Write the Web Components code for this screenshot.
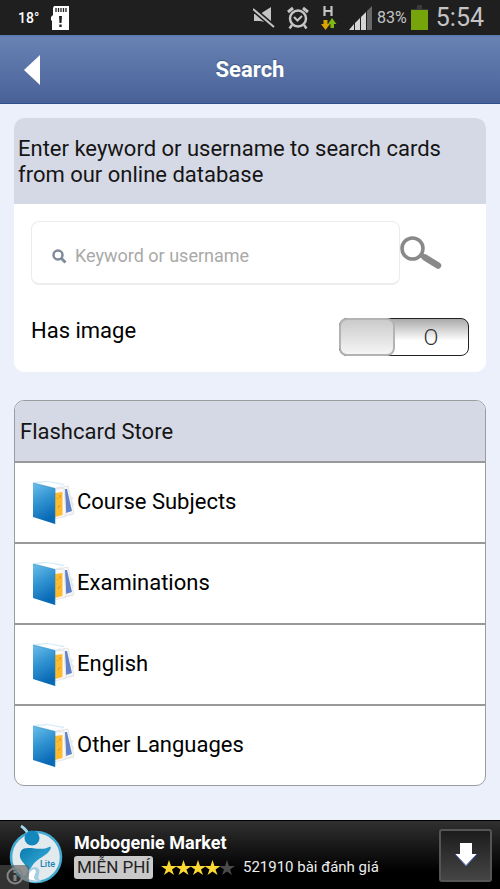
<!DOCTYPE html>
<html lang="en">
<head>
<meta charset="utf-8">
<meta name="viewport" content="width=device-width, initial-scale=1">
<title>Search</title>
<style>
    body {
        margin: 0;
        background: #ecf0fa;
        font-family: Roboto, "Noto Sans", sans-serif;
        font-size: 22px;
        line-height: 26px;
        color: #151515;
    }
</style>
</head>
<body>
<search-app></search-app>

<script>
class StatusBar extends HTMLElement {
    constructor() {
        super();
        this.attachShadow({ mode: 'open' });
    }

    connectedCallback() {
        this.shadowRoot.innerHTML = `
            <style>
                :host {
                    display: flex;
                    align-items: center;
                    justify-content: space-between;
                    height: 35px;
                    padding: 0 16px 0 18px;
                    background: #1f1f1f;
                    color: #c4c4c4;
                }
                div { display: flex; align-items: center; }
                svg { display: block; }
                .left { gap: 12px; color: #fff; }
                .temp { font-size: 14px; font-weight: 500; }
                .right { gap: 4px; }
                .level { font-size: 16px; }
                .clock { font-size: 25px; margin-left: 4px; }
                .icons { gap: 12px; }
            </style>
            <div class="left">
                <span class="temp">18°</span>
                <svg width="18" height="24" viewBox="0 0 18 24">
                    <path d="M3 0H18V24H1V15L0 14V11L2 9V2Z" fill="#fff"/>
                    <path d="M5 2V6M7.5 2V6M10 2V6M12.500 2V6M15 2V6" stroke="#1f1f1f" stroke-width="1.300"/>
                    <path d="M8 10H11L10.500 17H8.500ZM8.300 18.500H10.700V21H8.300Z" fill="#1f1f1f"/>
                </svg>
            </div>
            <div class="right">
                <div class="icons">
                    <svg width="22" height="22" viewBox="0 0 22 22">
                        <path d="M1 7H7L18 0V19L12 15L7 14H1Z" fill="#c4c4c4"/>
                        <path d="M0 2L21 20" stroke="#1f1f1f" stroke-width="5"/>
                        <path d="M0 2L21 20" stroke="#c4c4c4" stroke-width="2"/>
                    </svg>
                    <svg width="22" height="24" viewBox="0 0 22 24" fill="none" stroke="#c4c4c4">
                        <circle cx="11" cy="12.500" r="8" stroke-width="2.500"/>
                        <path d="M1 6L6 2M21 6L16 2" stroke-width="3"/>
                        <path d="M5 19L2.500 22.500M17 19L19.500 22.500" stroke-width="2.500"/>
                        <path d="M7 11L10.500 14.500L15 10" stroke-width="2"/>
                    </svg>
                    <svg width="16" height="24" viewBox="0 0 16 24">
                        <path d="M3.500 0V10M10.500 0V10M3.500 5H10.500" stroke="#c4c4c4" stroke-width="2.200"/>
                        <path d="M2.500 14H6.500V18H9L4.500 24L0 18H2.500Z" fill="#d9a400"/>
                        <path d="M11 12L15.500 18H13V22H9.500V18H7Z" fill="#7fb80e"/>
                    </svg>
                    <svg width="24" height="24" viewBox="0 0 24 24">
                        <path d="M0 24L5 18V24ZM6 24V17L11 12V24ZM12 24V11L17 6V24Z" fill="#d5d5d5"/>
                        <path d="M18 24V5L23 0V24Z" fill="#686868"/>
                    </svg>
                </div>
                <span class="level">83%</span>
                <svg width="17" height="25" viewBox="0 0 17 25">
                    <path d="M6 0H11V4H17V7H0V4H6Z" fill="#3a3a3a"/>
                    <path d="M0 5H17V25H0Z" fill="#76a50b"/>
                </svg>
                <span class="clock">5:54</span>
            </div>
        `;
    }
}

class TitleBar extends HTMLElement {
    constructor() {
        super();
        this.attachShadow({ mode: 'open' });
    }

    connectedCallback() {
        this.shadowRoot.innerHTML = `
            <style>
                :host {
                    display: grid;
                    grid-template-columns: 64px 1fr 64px;
                    align-items: center;
                    height: 66px;
                    border-top: 2px solid #5b7cb4;
                    border-bottom: 1px solid #2f4e8c;
                    background: linear-gradient(#6982b4, #486298);
                    color: #fff;
                }
                button {
                    height: 48px;
                    padding: 0;
                    border: 0;
                    background: none;
                }
                svg { display: block; margin: 0 auto; }
                h1 {
                    margin: 0;
                    font-size: 22px;
                    font-weight: 700;
                    text-align: center;
                    text-shadow: 0 -1px 1px #3e5780;
                }
            </style>
            <button aria-label="Back">
                <svg width="16" height="30" viewBox="0 0 16 30"><path d="M0 15L16 0V30Z" fill="#fff"/></svg>
            </button>
            <h1><slot></slot></h1>
        `;
    }
}

class CardPanel extends HTMLElement {
    constructor() {
        super();
        this.attachShadow({ mode: 'open' });
    }

    connectedCallback() {
        this.shadowRoot.innerHTML = `
            <style>
                :host {
                    display: block;
                    border-radius: 10px;
                    overflow: hidden;
                    background: #fff;
                }
                :host([outlined]) { border: 1px solid #999da2; }
                header {
                    padding: 18px 4px 16px;
                    background: #d5d9e5;
                }
                :host([outlined]) header { padding-left: 5px; }
            </style>
            <header><slot name="head"></slot></header>
            <slot></slot>
        `;
    }
}

class SearchForm extends HTMLElement {
    constructor() {
        super();
        this.attachShadow({ mode: 'open' });
    }

    connectedCallback() {
        this.shadowRoot.innerHTML = `
            <style>
                :host { display: block; padding: 17px 17px 16px; }
                .row { display: flex; align-items: flex-start; }
                .field {
                    flex: 1;
                    display: flex;
                    align-items: center;
                    gap: 8px;
                    height: 54px;
                    padding: 7px 20px 0;
                    border: 1px solid #ececec;
                    border-bottom-width: 2px;
                    border-radius: 8px;
                }
                input[type="text"] {
                    flex: 1;
                    min-width: 0;
                    padding: 0;
                    border: 0;
                    outline: 0;
                    background: none;
                    font: inherit;
                    font-size: 18px;
                    color: inherit;
                }
                input::placeholder { color: #a9a9a9; opacity: 1; }
                button {
                    width: 69px;
                    height: 64px;
                    padding: 0;
                    border: 0;
                    background: none;
                }
                svg { display: block; }
                .option { justify-content: space-between; margin-top: 33px; }
                .option > label { color: #000; }
                .toggle {
                    display: flex;
                    width: 128px;
                    height: 36px;
                    border: 1px solid #222;
                    border-radius: 8px;
                    background: linear-gradient(#aaa, #fff 60%);
                }
                .toggle input {
                    appearance: none;
                    width: 56px;
                    margin: -1px;
                    border: 2px solid #b3b3b3;
                    border-radius: 8px;
                    background: linear-gradient(#cbcbcb, #f5f5f5);
                }
                .toggle span {
                    flex: 1;
                    padding-top: 6px;
                    text-align: center;
                    font-weight: 300;
                    color: #333;
                }
            </style>
            <div class="row">
                <div class="field">
                    <svg width="15" height="15" viewBox="0 0 15 15" fill="none" stroke="#7f8b9a">
                        <circle cx="6" cy="6" r="4.500" stroke-width="2.500"/>
                        <path d="M9.500 9.500L13.500 13.500" stroke-width="3"/>
                    </svg>
                    <input type="text" id="keyword" aria-label="Keyword or username" placeholder="Keyword or username">
                </div>
                <button aria-label="Search">
                    <svg width="42" height="34" viewBox="0 0 42 34" fill="none" stroke="#898989">
                        <circle cx="12.500" cy="12.500" r="10.500" stroke-width="3.600"/>
                        <path d="M20 18L25 22" stroke-width="4.500"/>
                        <path d="M25 21.500L38 29.500" stroke-width="6.500" stroke-linecap="round"/>
                    </svg>
                </button>
            </div>
            <div class="row option">
                <label for="has-image">Has image</label>
                <div class="toggle">
                    <input type="checkbox" role="switch" id="has-image">
                    <span>O</span>
                </div>
            </div>
        `;
    }
}

class StoreItem extends HTMLElement {
    constructor() {
        super();
        this.attachShadow({ mode: 'open' });
    }

    connectedCallback() {
        this.shadowRoot.innerHTML = `
            <style>
                :host { display: block; border-top: 2px solid #999; }
                a {
                    display: flex;
                    align-items: center;
                    height: 79px;
                    padding-left: 17px;
                    color: #000;
                    text-decoration: none;
                }
                svg { flex: none; }
                span { padding-bottom: 2px; }
            </style>
            <a href="#">
                <svg width="45" height="45" viewBox="0 0 45 45">
                    <defs>
                        <linearGradient id="cover" x1="0" y1="0" x2="0.300" y2="1">
                            <stop offset="0" stop-color="#69bfe9"/>
                            <stop offset="0.500" stop-color="#3293d2"/>
                            <stop offset="1" stop-color="#0869b5"/>
                        </linearGradient>
                    </defs>
                    <path d="M37 15L42 18L40 21L43 25L40 27L42 35L35 36Z" fill="#efefef"/>
                    <path d="M1 2L15 1L33 4L23 9Z" fill="#cfecf8"/>
                    <path d="M5 3L16 2L31 5L23 8Z" fill="#fff"/>
                    <path d="M25 8L36 6L42 33L31 37Z" fill="#f8f8f8" stroke="#e0e0e0" stroke-width="0.800"/>
                    <path d="M33 9L35 9L40 31L34 33Z" fill="#5f83cb"/>
                    <path d="M23 9L32 8L34 36L23 39Z" fill="#f8f8f8" stroke="#e0e0e0" stroke-width="0.800"/>
                    <path d="M23 13L30.500 12V35L23 37Z" fill="#fdbb2d"/>
                    <path d="M25 18L26 19M28 15V18M26 28L28 25" stroke="#c99735"/>
                    <path d="M1 3L23 8.500V44L1 37Z" fill="url(#cover)"/>
                    <path d="M1 3L23 8.500V44" fill="none" stroke="#2887c4" stroke-width="0.600"/>
                </svg>
                <span><slot></slot></span>
            </a>
        `;
    }
}

class AdBanner extends HTMLElement {
    constructor() {
        super();
        this.attachShadow({ mode: 'open' });
    }

    connectedCallback() {
        const star = 'M8 0L10 6H16L11 9.500L13 15L8 11.500L3 15L5 9.500L0 6H6Z';
        const stars = [0, 1, 2, 3, 4].map(i =>
            `<path d="${star}" transform="translate(${i * 14.5} 0)" fill="${i < 4 ? '#fdd835' : '#4a4a4a'}"/>`
        ).join('');

        this.shadowRoot.innerHTML = `
            <style>
                :host {
                    display: flex;
                    align-items: center;
                    height: 68px;
                    padding-right: 8px;
                    border-top: 1px solid #000;
                    background: linear-gradient(#303030, #000 75%);
                    color: #fff;
                }
                svg { display: block; flex: none; }
                .text { flex: 1; margin-left: 10px; }
                .name { font-size: 18px; font-weight: 700; line-height: 24px; }
                .meta { display: flex; align-items: center; gap: 8px; }
                .free {
                    padding: 0 3px;
                    border-radius: 3px;
                    background: #c9c9c9;
                    color: #222;
                    font-size: 17px;
                    line-height: 23px;
                }
                .count { font-size: 15px; line-height: 24px; color: #eee; }
                button {
                    display: grid;
                    place-items: center;
                    width: 53px;
                    height: 53px;
                    padding: 0;
                    border: 2px solid #555;
                    border-radius: 3px;
                    background: linear-gradient(#1c1c1c, #454545);
                }
            </style>
            <svg width="64" height="68" viewBox="0 0 64 68">
                <defs>
                    <linearGradient id="swirl" x1="0" y1="0" x2="1" y2="1">
                        <stop offset="0" stop-color="#0879ae"/>
                        <stop offset="1" stop-color="#42b9df"/>
                    </linearGradient>
                </defs>
                <circle cx="36" cy="36" r="25" fill="#e3eaed" stroke="#42aad2" stroke-width="2.500"/>
                <path d="M21 5C25 7 27 11 30 15" fill="none" stroke="#a4d9ee" stroke-width="3"/>
                <circle cx="32" cy="17" r="7.500" fill="#1488bd"/>
                <path d="M21 30C25 23 41 31 49 26C53 24 50 31 45 34C36 40 31 43 29 53C29 43 16 40 21 30Z" fill="url(#swirl)"/>
                <path d="M26 54C29 44 42 44 39 53C37 58 40 60 43 60C30 63 23 60 20 56Z" fill="#a5cfe0"/>
                <path d="M29 53C32 46 38 48 35 53C33 57 34 59 38 60L27 58Z" fill="#fff"/>
                <text x="40" y="46" font-size="9" font-weight="500" fill="#1683b5">Lite</text>
                <path d="M0 44H26Q29 44 29 47V68H0Z" fill="#555" fill-opacity="0.600"/>
                <circle cx="15" cy="55" r="7.500" fill="none" stroke="#858585" stroke-width="2"/>
                <path d="M15 50V52M15 54V60" stroke="#858585" stroke-width="3"/>
            </svg>
            <div class="text">
                <div class="name">Mobogenie Market</div>
                <div class="meta">
                    <span class="free">MIỄN PHÍ</span>
                    <svg width="74" height="15" viewBox="0 0 74 15" role="img" aria-label="4 of 5">${stars}</svg>
                    <span class="count">521910 bài đánh giá</span>
                </div>
            </div>
            <button aria-label="Download">
                <svg width="22" height="24" viewBox="0 0 22 24">
                    <path d="M5 0H17V11H22L11 23L0 11H5Z" fill="#fff"/>
                    <path d="M0 11L11 22.500L22 11" fill="none" stroke="#4b68bd"/>
                </svg>
            </button>
        `;
    }
}

class SearchApp extends HTMLElement {
    constructor() {
        super();
        this.attachShadow({ mode: 'open' });
    }

    connectedCallback() {
        this.shadowRoot.innerHTML = `
            <style>
                :host {
                    display: flex;
                    flex-direction: column;
                    min-height: 100vh;
                }
                main {
                    flex: 1;
                    display: flex;
                    flex-direction: column;
                    gap: 28px;
                    padding: 14px;
                }
            </style>
            <status-bar></status-bar>
            <title-bar>Search</title-bar>
            <main>
                <card-panel>
                    <span slot="head">Enter keyword or username to search cards from our online database</span>
                    <search-form></search-form>
                </card-panel>
                <card-panel outlined>
                    <span slot="head">Flashcard Store</span>
                    <store-item>Course Subjects</store-item>
                    <store-item>Examinations</store-item>
                    <store-item>English</store-item>
                    <store-item>Other Languages</store-item>
                </card-panel>
            </main>
            <ad-banner></ad-banner>
        `;
    }
}

customElements.define('status-bar', StatusBar);
customElements.define('title-bar', TitleBar);
customElements.define('card-panel', CardPanel);
customElements.define('search-form', SearchForm);
customElements.define('store-item', StoreItem);
customElements.define('ad-banner', AdBanner);
customElements.define('search-app', SearchApp);
</script>
</body>
</html>
